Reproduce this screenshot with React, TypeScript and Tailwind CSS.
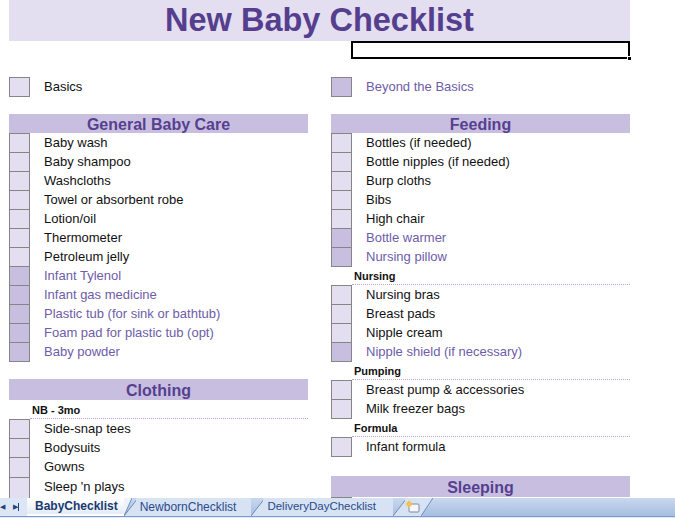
import React from 'react';

type Row =
  | { kind: 'item'; label: string; dark?: boolean; h?: string }
  | { kind: 'sub'; label: string }
  | { kind: 'band'; label: string; h?: string }
  | { kind: 'blank'; h: string };

const leftRows: Row[] = [
  { kind: 'band', label: 'General Baby Care' },
  { kind: 'item', label: 'Baby wash' },
  { kind: 'item', label: 'Baby shampoo' },
  { kind: 'item', label: 'Washcloths' },
  { kind: 'item', label: 'Towel or absorbent robe' },
  { kind: 'item', label: 'Lotion/oil' },
  { kind: 'item', label: 'Thermometer' },
  { kind: 'item', label: 'Petroleum jelly' },
  { kind: 'item', label: 'Infant Tylenol', dark: true },
  { kind: 'item', label: 'Infant gas medicine', dark: true },
  { kind: 'item', label: 'Plastic tub (for sink or bathtub)', dark: true },
  { kind: 'item', label: 'Foam pad for plastic tub (opt)', dark: true },
  { kind: 'item', label: 'Baby powder', dark: true },
  { kind: 'blank', h: 'h-[18px]' },
  { kind: 'band', label: 'Clothing', h: 'h-[21px]' },
  { kind: 'sub', label: 'NB - 3mo' },
  { kind: 'item', label: 'Side-snap tees' },
  { kind: 'item', label: 'Bodysuits' },
  { kind: 'item', label: 'Gowns', h: 'h-[20px]' },
  { kind: 'item', label: "Sleep 'n plays", h: 'h-[21px]' },
  { kind: 'item', label: '' },
];

const rightRows: Row[] = [
  { kind: 'band', label: 'Feeding' },
  { kind: 'item', label: 'Bottles (if needed)' },
  { kind: 'item', label: 'Bottle nipples (if needed)' },
  { kind: 'item', label: 'Burp cloths' },
  { kind: 'item', label: 'Bibs' },
  { kind: 'item', label: 'High chair' },
  { kind: 'item', label: 'Bottle warmer', dark: true },
  { kind: 'item', label: 'Nursing pillow', dark: true },
  { kind: 'sub', label: 'Nursing' },
  { kind: 'item', label: 'Nursing bras' },
  { kind: 'item', label: 'Breast pads' },
  { kind: 'item', label: 'Nipple cream' },
  { kind: 'item', label: 'Nipple shield (if necessary)', dark: true },
  { kind: 'sub', label: 'Pumping' },
  { kind: 'item', label: 'Breast pump & accessories' },
  { kind: 'item', label: 'Milk freezer bags' },
  { kind: 'sub', label: 'Formula' },
  { kind: 'item', label: 'Infant formula' },
  { kind: 'blank', h: 'h-[20px]' },
  { kind: 'band', label: 'Sleeping', h: 'h-[21px]' },
  { kind: 'item', label: '' },
];

const Box = ({ dark, h }: { dark?: boolean; h?: string }) => (
  <div
    className={`w-[21px] shrink-0 border border-[#858585] ${h === 'h-[21px]' ? 'h-[22px]' : h === 'h-[20px]' ? 'h-[21px]' : 'h-[20px]'} ${dark ? 'bg-[#c8bfe0]' : 'bg-[#e3def0]'}`}
  />
);

const Item = ({ label, dark, h }: { label: string; dark?: boolean; h?: string }) => (
  <div className={`${h ?? 'h-[19px]'} flex items-start`}>
    <Box dark={dark} h={h} />
    <span
      className={`pl-[14px] leading-[19px] text-[13px] whitespace-nowrap ${dark ? 'text-[#6e5ca8]' : 'text-[#111]'}`}
    >
      {label}
    </span>
  </div>
);

const Column = ({ rows }: { rows: Row[] }) => (
  <div className="flex flex-col w-[299px]">
    {rows.map((r, i) => {
      if (r.kind === 'band')
        return (
          <div
            key={i}
            className={`${r.h ?? 'h-[19px]'} bg-[#c8bfe0] flex items-center justify-center pt-[3px] text-[16px] font-bold text-[#573f90] leading-none`}
          >
            {r.label}
          </div>
        );
      if (r.kind === 'sub')
        return (
          <div key={i} className="h-[19px] flex items-end">
            <div className="w-[21px] shrink-0" />
            <div className="flex-1 h-[19px] border-b border-dotted border-[#b9a3d8] text-[11px] font-bold text-[#111] leading-[20px] pl-[2px]">
              {r.label}
            </div>
          </div>
        );
      if (r.kind === 'blank') return <div key={i} className={r.h} />;
      return <Item key={i} label={r.label} dark={r.dark} h={r.h} />;
    })}
  </div>
);

const Slant = ({ fill }: { fill: string }) => (
  <svg width="14" height="18" viewBox="0 0 14 18" className="shrink-0 -mr-[2px]">
    <polygon points="0,18 14,0 14,18" fill={fill} />
    <line x1="0" y1="18" x2="14" y2="0" stroke="#6f8cc0" strokeWidth="1" />
  </svg>
);

const TabBar = () => (
  <div className="h-[20px] flex flex-col bg-gradient-to-b from-[#c9d8ee] to-[#a2bbe0]">
    <div className="h-[18px] flex items-stretch">
      <div className="w-[27px] bg-[#dce6f4] flex items-center text-[#22407a] text-[7px] gap-[8px]">
        <span>◀</span>
        <span className="flex items-center">
          ▶<span className="w-px h-[8px] bg-[#22407a]" />
        </span>
      </div>
      <div className="flex items-stretch">
        <div className="relative z-10 flex items-stretch">
          <div className="bg-gradient-to-b from-[#ffffff] to-[#e4ebf6] pl-[8px] pr-[6px] flex items-center text-[12px] font-bold text-[#1c3a70] border-b-2 border-[#ffffff]">
            BabyChecklist
          </div>
          <svg width="8" height="18" viewBox="0 0 8 18" className="shrink-0">
            <polygon points="0,0 8,0 0,18" fill="#eef2fa" />
            <line x1="8" y1="0" x2="0" y2="18" stroke="#6f8cc0" />
          </svg>
        </div>
        <div className="-ml-[8px] flex items-stretch">
          <Slant fill="#d7e2f3" />
          <div className="bg-[#d7e2f3] pl-[4px] pr-[15px] flex items-center text-[12px] text-[#2a4a8c]">
            NewbornChecklist
          </div>
        </div>
        <div className="flex items-stretch">
          <Slant fill="#d7e2f3" />
          <div className="bg-[#d7e2f3] pl-[4px] pr-[17px] flex items-center text-[11.5px] text-[#2a4a8c]">
            DeliveryDayChecklist
          </div>
        </div>
        <div className="flex items-stretch">
          <Slant fill="#d7e2f3" />
          <div className="bg-[#d7e2f3] w-[16px] flex items-center justify-center">
            <svg width="16" height="14" viewBox="0 0 16 14">
              <rect x="4" y="4" width="10" height="8" rx="1" fill="#f4f6fa" stroke="#7b8aa3" />
              <circle cx="4" cy="4" r="2.5" fill="#f3b43a" />
              <path d="M4 0v8M0 4h8M1.5 1.5l5 5M6.5 1.5l-5 5" stroke="#f6c85a" strokeWidth="0.8" />
            </svg>
          </div>
          <svg width="12" height="18" viewBox="0 0 12 18" className="shrink-0">
            <polygon points="0,0 12,0 0,18" fill="#d7e2f3" />
            <line x1="12" y1="0" x2="0" y2="18" stroke="#6f8cc0" />
          </svg>
        </div>
      </div>
      <div className="flex-1" />
    </div>
    <div className="h-[1px] bg-[#7f9bcb]" />
    <div className="h-[1px] bg-[#dfe8f5]" />
  </div>
);

export default function App() {
  return (
    <div
      className="w-[675px] h-[518px] overflow-hidden flex flex-col bg-white"
      style={{ fontFamily: '"Liberation Sans", Arial, sans-serif' }}
    >
      <div className="h-[498px] overflow-hidden pl-[9px]">
        <div className="w-[621px] h-[41px] bg-[#e3def0] flex items-center justify-center">
          <span className="text-[32.5px] font-bold text-[#553e8d] leading-none">New Baby Checklist</span>
        </div>
        <div className="h-[20px] pl-[342px]">
          <div className="relative w-[279px] h-[18px] border-2 border-black">
            <div className="absolute -right-[4px] -bottom-[4px] w-[5px] h-[5px] bg-black border border-white" />
          </div>
        </div>
        <div className="h-[16px]" />
        <div className="flex gap-[23px]">
          <div className="w-[299px] flex">
            <Item label="Basics" />
          </div>
          <div className="w-[299px] flex">
            <Item label="Beyond the Basics" dark />
          </div>
        </div>
        <div className="h-[18px]" />
        <div className="flex gap-[23px] items-start">
          <Column rows={leftRows} />
          <Column rows={rightRows} />
        </div>
      </div>
      <TabBar />
    </div>
  );
}
